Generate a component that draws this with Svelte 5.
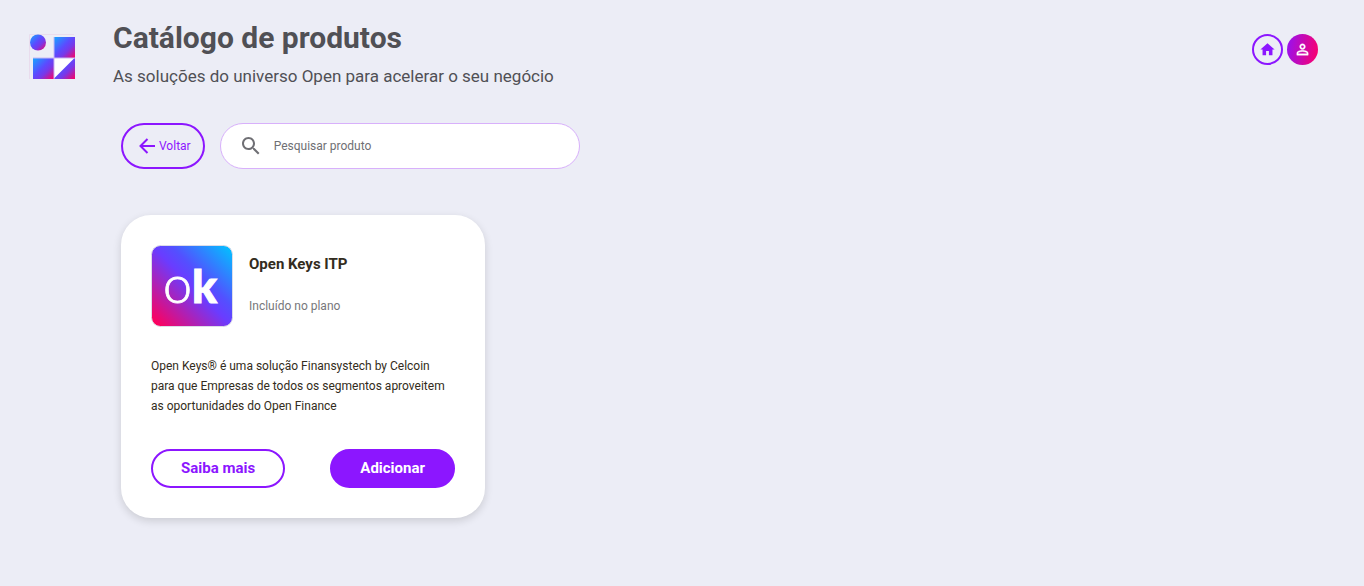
<script lang="ts">
	interface Product {
		id: number;
		name: string;
		plan: string;
		description: string;
	}

	let search = $state('');

	const products: Product[] = [
		{
			id: 1,
			name: 'Open Keys ITP',
			plan: 'Incluído no plano',
			description:
				'Open Keys® é uma solução Finansystech by Celcoin para que Empresas de todos os segmentos aproveitem as oportunidades do Open Finance'
		}
	];

	let visible = $derived(
		products.filter((p) => p.name.toLowerCase().includes(search.trim().toLowerCase()))
	);
</script>

<div class="page">
	<header>
		<a class="logo" href="/" aria-label="Finansystech">
			<svg viewBox="0 0 48 48" width="48" height="48" aria-hidden="true">
				<defs>
					<linearGradient id="brand" x1="0" y1="0" x2="1" y2="1">
						<stop offset="0" stop-color="#15a8ff" />
						<stop offset="0.45" stop-color="#5b4bff" />
						<stop offset="0.65" stop-color="#7838e8" />
						<stop offset="1" stop-color="#ff0060" />
					</linearGradient>
				</defs>
				<path d="M1.5 46V1.5H46" fill="none" stroke="#e9dced" />
				<circle cx="10" cy="9.5" r="8" fill="url(#brand)" />
				<rect x="26" y="4" width="21" height="21" fill="url(#brand)" />
				<rect x="5" y="25" width="21" height="21" fill="url(#brand)" />
				<rect x="26" y="25" width="21" height="21" fill="url(#brand)" />
				<path d="M26 25H46.5L26 45.5Z" fill="#fff" />
				<path d="M26 4V46M5 25H47" fill="none" stroke="#c9b6f5" />
			</svg>
		</a>
		<div class="heading">
			<h1>Catálogo de produtos</h1>
			<p>As soluções do universo Open para acelerar o seu negócio</p>
		</div>
		<nav>
			<a class="round home" href="/" aria-label="Início">
				<svg viewBox="0 0 24 24" width="17" height="17" aria-hidden="true">
					<path d="M10 20v-6h4v6h5v-8h3L12 3 2 12h3v8z" fill="currentColor" />
				</svg>
			</a>
			<button class="round user" aria-label="Perfil">
				<svg viewBox="0 0 24 24" width="17" height="17" aria-hidden="true">
					<path
						d="M12 5.9a2.1 2.1 0 1 1 0 4.2 2.1 2.1 0 0 1 0-4.2m0 9c2.97 0 6.1 1.46 6.1 2.1v1.1H5.9V17c0-.64 3.13-2.1 6.1-2.1M12 4C9.79 4 8 5.79 8 8s1.79 4 4 4 4-1.79 4-4-1.79-4-4-4zm0 9c-2.67 0-8 1.34-8 4v3h16v-3c0-2.66-5.33-4-8-4z"
						fill="currentColor"
						stroke="currentColor"
						stroke-width="0.6"
					/>
				</svg>
			</button>
		</nav>
	</header>

	<main>
		<div class="toolbar">
			<button class="back">
				<svg viewBox="0 0 16 16" width="16" height="16" aria-hidden="true">
					<path d="M16 8H2M8.5 1L1.5 8l7 7" fill="none" stroke="currentColor" stroke-width="2" />
				</svg>
				Voltar
			</button>
			<label class="search">
				<svg viewBox="0 0 24 24" width="24" height="24" aria-hidden="true">
					<path
						d="M15.5 14h-.79l-.28-.27C15.41 12.59 16 11.11 16 9.5 16 5.91 13.09 3 9.5 3S3 5.91 3 9.5 5.91 16 9.5 16c1.61 0 3.09-.59 4.23-1.57l.27.28v.79l5 4.99L20.49 19l-4.99-5zm-6 0C7.01 14 5 11.99 5 9.5S7.01 5 9.5 5 14 7.01 14 9.5 11.99 14 9.5 14z"
						fill="currentColor"
					/>
				</svg>
				<input type="text" placeholder="Pesquisar produto" aria-label="Pesquisar produto" bind:value={search} />
			</label>
		</div>

		<div class="products">
			{#each visible as product (product.id)}
				<article class="card">
					<div class="summary">
						<svg class="thumb" viewBox="0 0 82 82" width="82" height="82" aria-hidden="true">
							<defs>
								<linearGradient id="ok-{product.id}" x1="0" y1="1" x2="1" y2="0">
									<stop offset="0.04" stop-color="#ff005c" />
									<stop offset="0.5" stop-color="#6a3cff" />
									<stop offset="0.62" stop-color="#5350ff" />
									<stop offset="0.95" stop-color="#08b8ff" />
								</linearGradient>
							</defs>
							<rect x="0.5" y="0.5" width="81" height="81" rx="9" fill="url(#ok-{product.id})" stroke="#dcdce8" />
							<text x="12" y="58"><tspan class="light">o</tspan><tspan class="heavy">k</tspan></text>
						</svg>
						<div class="info">
							<h2>{product.name}</h2>
							<p>{product.plan}</p>
						</div>
					</div>
					<p class="description">{product.description}</p>
					<div class="actions">
						<button class="more">Saiba mais</button>
						<button class="add">Adicionar</button>
					</div>
				</article>
			{/each}
		</div>
	</main>
</div>

<style>
	:global(body) {
		margin: 0;
		background: #ecedf6;
	}

	.page {
		font-family: Roboto, sans-serif;
		color: #505055;
	}

	h1,
	h2,
	p {
		margin: 0;
	}

	button,
	input {
		font-family: inherit;
	}

	header {
		display: flex;
		align-items: flex-start;
		padding: 20px 46px 0 28px;
	}

	.logo {
		display: block;
		height: 48px;
		margin-top: 13px;
	}

	.heading {
		flex: 1;
		margin-left: 37px;
	}

	h1 {
		font-size: 30px;
		line-height: 36px;
		font-weight: 700;
	}

	.heading p {
		margin-top: 8px;
		font-size: 17px;
		line-height: 24px;
	}

	nav {
		display: flex;
		gap: 4px;
		margin-top: 14px;
	}

	.round {
		display: flex;
		align-items: center;
		justify-content: center;
		box-sizing: border-box;
		width: 31px;
		height: 31px;
		padding: 0;
		border-radius: 50%;
		cursor: pointer;
	}

	.home {
		border: 2px solid #8c16ff;
		color: #8c16ff;
	}

	.user {
		border: none;
		background: linear-gradient(100deg, #9412f5, #ff0068);
		color: #fff;
	}

	main {
		padding: 35px 46px 48px 121px;
	}

	.toolbar {
		display: flex;
		gap: 15px;
	}

	.back {
		display: flex;
		align-items: center;
		gap: 4px;
		height: 46px;
		padding: 0 12px 0 16px;
		border: 2px solid #8c16ff;
		border-radius: 23px;
		background: transparent;
		color: #8c16ff;
		font-size: 12px;
		cursor: pointer;
	}

	.search {
		display: flex;
		align-items: center;
		gap: 11px;
		box-sizing: border-box;
		width: 360px;
		height: 46px;
		padding: 0 18px;
		border: 1px solid #d8b0fb;
		border-radius: 23px;
		background: #fff;
		color: #6f6f74;
	}

	.search input {
		flex: 1;
		min-width: 0;
		padding: 0;
		border: none;
		outline: none;
		background: transparent;
		color: #505055;
		font-size: 12px;
	}

	.search input::placeholder {
		color: #6f6f74;
		opacity: 1;
	}

	.products {
		display: flex;
		flex-wrap: wrap;
		gap: 30px;
		margin-top: 46px;
	}

	.card {
		box-sizing: border-box;
		width: 364px;
		padding: 30px;
		border-radius: 30px;
		background: #fff;
		box-shadow: 0 3px 8px rgba(0, 0, 0, 0.14);
	}

	.summary {
		display: flex;
		gap: 16px;
	}

	.thumb text {
		fill: #fff;
		stroke: #fff;
		font-family: Lato, sans-serif;
	}

	.thumb .light {
		stroke-width: 0.8;
		font-size: 52px;
		font-weight: 300;
	}

	.thumb .heavy {
		stroke-width: 1;
		font-size: 46px;
		font-weight: 900;
	}

	h2 {
		margin-top: 9px;
		color: #332c20;
		font-size: 15px;
		line-height: 20px;
		font-weight: 700;
	}

	.info p {
		margin-top: 22px;
		color: #77777b;
		font-size: 12px;
		line-height: 20px;
	}

	.description {
		margin-top: 29px;
		color: #332c20;
		font-size: 12px;
		line-height: 20px;
	}

	.actions {
		display: flex;
		justify-content: space-between;
		margin-top: 33px;
	}

	.actions button {
		height: 39px;
		padding: 0 28px 2px;
		border: 2px solid #8c16ff;
		border-radius: 20px;
		font-size: 15px;
		font-weight: 700;
		cursor: pointer;
	}

	.more {
		background: #fff;
		color: #8c16ff;
	}

	.add {
		background: #8c16ff;
		color: #fff;
	}
</style>
